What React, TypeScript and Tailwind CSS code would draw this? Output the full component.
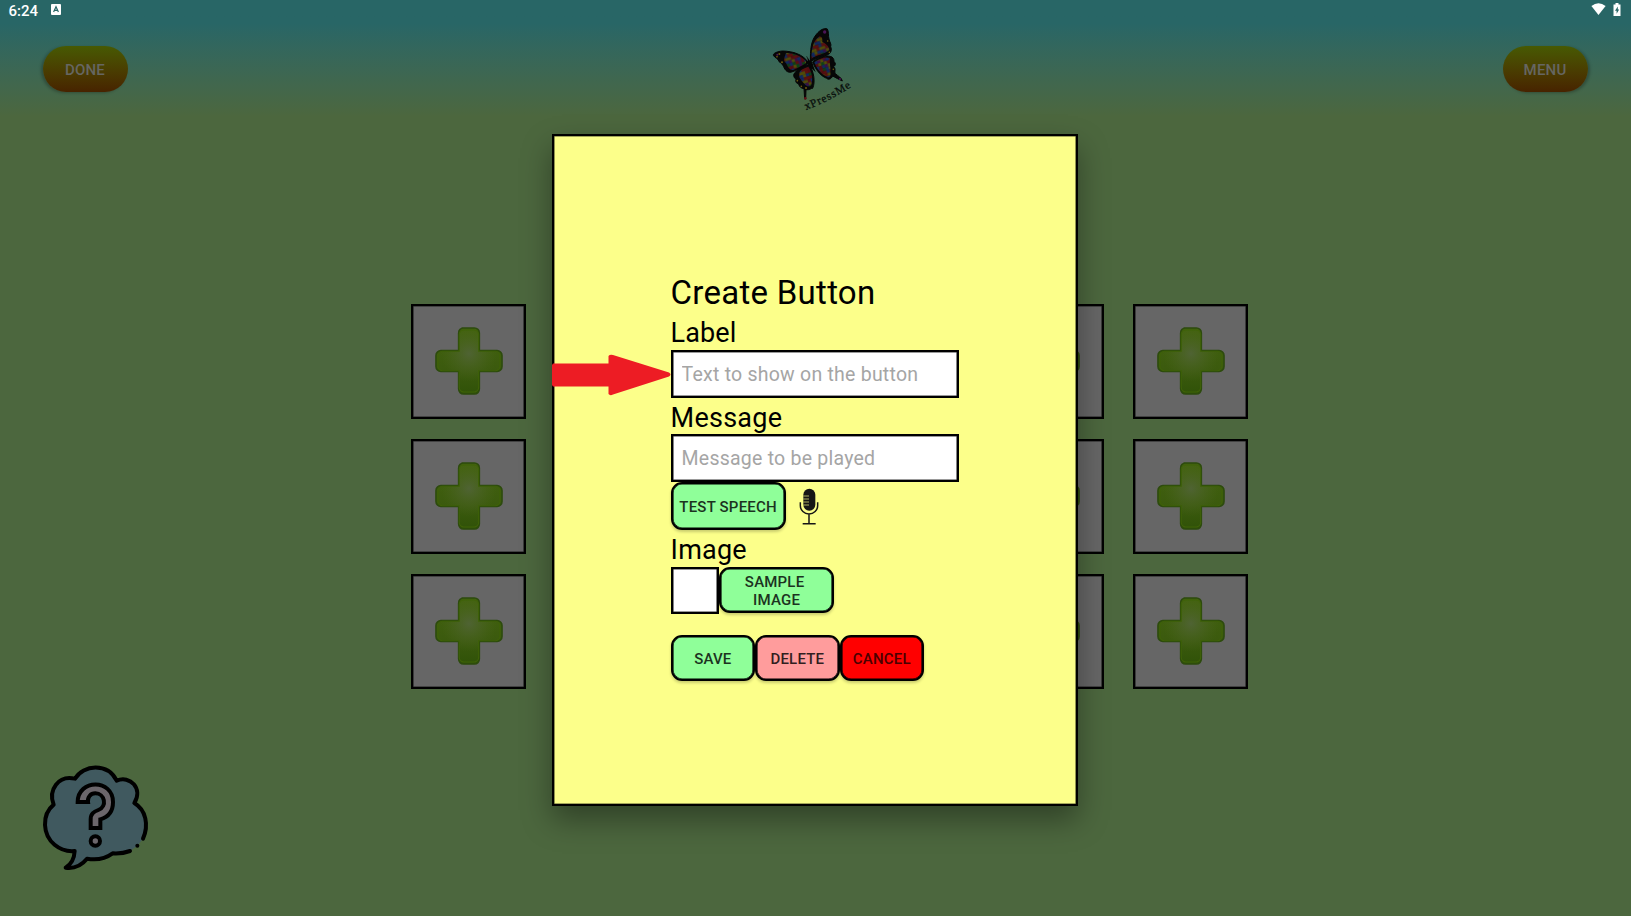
import React from "react";

const PALETTE = ["#520c12", "#10285e", "#0d4016", "#504b0a", "#3a0e46", "#5a0f0e"];

const speckles = Array.from({ length: 144 }, (_, i) => ({
  x: (i % 12) * 9,
  y: Math.floor(i / 12) * 9,
  fill: PALETTE[(i * 7 + Math.floor(i / 12) * 5 + ((i * i) % 11)) % 6],
}));

function Butterfly() {
  return (
    <svg viewBox="0 0 390 330" className="h-[110px] w-[130px]">
      <defs>
        <pattern id="puzzle" width="108" height="108" patternUnits="userSpaceOnUse" patternTransform="rotate(-18)">
          {speckles.map((s, i) => (
            <g key={i} fill={s.fill}>
              <rect x={s.x} y={s.y} width="9.5" height="9.5" />
              <circle cx={s.x + 9} cy={s.y + 4} r="2.6" />
            </g>
          ))}
        </pattern>
      </defs>
      <g stroke="#050505" strokeLinejoin="round" strokeWidth="3">
        <path fill="#070707" d="M181 156 C181 120 182 92 200 72 C210 60 222 53 232 57 C237 65 234 77 237 87 C239 97 245 102 242 110 C246 119 244 130 232 135 C213 140 196 145 181 156Z" />
        <path fill="#070707" d="M174 156 C158 133 130 124 98 123 C82 124 69 130 70 136 C74 144 86 146 87 155 C94 159 98 164 101 170 C105 181 113 188 122 187 C142 181 159 171 174 160Z" />
        <path fill="#070707" d="M188 156 C206 140 232 134 246 141 C252 146 252 151 252 155 C260 160 255 167 251 170 C259 177 252 184 256 191 C264 198 275 203 277 213 C266 209 257 202 248 198 C243 208 235 210 230 205 C211 198 195 176 188 156Z" />
        <path fill="#070707" d="M178 163 C160 168 143 176 136 187 C128 193 131 203 138 208 C135 218 141 220 146 222 C148 231 154 235 162 236 L164 267 L167 267 L168 239 C178 241 184 234 188 235 C197 215 191 184 178 163Z" />
      </g>
      <g fill="url(#puzzle)">
        <path d="M184 146 C185 115 189 92 207 80 C216 77 218 87 217 96 C226 99 239 111 238 120 C224 133 200 134 184 146Z" />
        <path d="M168 153 C151 136 128 128 108 129 C105 140 97 151 108 159 C114 171 119 181 129 180 C143 175 156 167 168 159Z" />
        <path d="M193 157 C207 145 228 138 240 145 C237 158 243 172 241 187 C244 198 238 205 231 200 C213 193 199 174 193 157Z" />
        <path d="M175 170 C159 175 147 182 148 191 C144 201 154 211 163 221 C171 231 180 231 184 225 C189 209 187 188 175 170Z" />
      </g>
      <g fill="#6b5a10">
        <circle cx="88" cy="132" r="3" />
        <circle cx="81" cy="140" r="2.5" />
        <circle cx="96" cy="157" r="3" />
        <circle cx="142" cy="212" r="2.5" />
        <circle cx="154" cy="229" r="2.5" />
        <circle cx="168" cy="234" r="3" />
        <circle cx="250" cy="178" r="2.5" />
        <circle cx="233" cy="93" r="2.5" />
        <circle cx="238" cy="127" r="2.5" />
      </g>
      <g fill="#4a1556">
        <circle cx="224" cy="66" r="5" />
        <circle cx="82" cy="134" r="3" />
        <circle cx="270" cy="207" r="3" />
      </g>
      <circle cx="166" cy="265" r="4" fill="#5f1217" />
      <path d="M173 143 L178 151 C184 153 189 160 190 168 L197 187 L184 174 L174 161Z" fill="#050505" />
      <path d="M176 151 L170 139 M181 152 L183 141" stroke="#050505" strokeWidth="2" fill="none" />
      <path id="logo-line" d="M168 300 Q242 273 320 221" fill="none" />
      <text fill="#070d0b" stroke="#070d0b" strokeWidth="0.8" fontSize="34" fontFamily="'Liberation Serif', serif">
        <textPath href="#logo-line" textLength="153">xPressMe</textPath>
      </text>
    </svg>
  );
}

const PLUS =
  "M29 2 h13 a5 5 0 0 1 5 5 v18 h18 a5 5 0 0 1 5 5 v11 a5 5 0 0 1 -5 5 h-18 v18 a5 5 0 0 1 -5 5 h-11 a5 5 0 0 1 -5 -5 v-18 h-18 a5 5 0 0 1 -5 -5 v-11 a5 5 0 0 1 5 -5 h18 v-18 a5 5 0 0 1 5 -5z";

function Tile() {
  return (
    <div className="flex h-[115px] w-[115px] items-center justify-center border-2 border-black bg-[#666666] pb-px pr-[0.5px] shadow-[inset_0_0_0_0.6px_rgba(0,0,0,0.7)]">
      <svg viewBox="0 0 72 71" className="h-[70px] w-[71px]">
        <defs>
          <linearGradient id="plus" x1="0" y1="0" x2="0" y2="1">
            <stop offset="0" stopColor="#43630f" />
            <stop offset="0.65" stopColor="#3b5a0e" />
            <stop offset="1" stopColor="#305208" />
          </linearGradient>
          <radialGradient id="shine" cx="0.5" cy="0.38" r="0.45">
            <stop offset="0" stopColor="#52643a" stopOpacity="0.85" />
            <stop offset="1" stopColor="#4d6620" stopOpacity="0" />
          </radialGradient>
        </defs>
        <path d={PLUS} fill="url(#plus)" stroke="#2d4b0d" strokeWidth="1.6" />
        <path d={PLUS} fill="url(#shine)" stroke="#3f6208" strokeWidth="1.2" transform="translate(2.2 2.2) scale(0.938)" />
      </svg>
    </div>
  );
}

function HelpBubble() {
  return (
    <svg viewBox="0 0 450 420" className="h-[140px] w-[150px]" fill="none" stroke="#000" strokeWidth="12" strokeLinecap="round" strokeLinejoin="round">
      <path
        fill="#40595f"
        stroke="none"
        d="M165 86 C190 43 263 38 290 92 C330 75 370 115 343 159 C378 180 389 225 370 265 L352 287 L330 303 Q305 312 278 310 Q245 334 201 326 Q175 358 137 353 C153 343 163 325 164 303 C120 307 77 275 75 225 C74 200 84 178 101 164 C84 120 115 74 165 86Z"
      />
      <path d="M330 303 Q305 312 278 310 Q245 334 201 326 Q175 358 137 353 C153 343 163 325 164 303 C120 307 77 275 75 225 C74 200 84 178 101 164 C84 120 115 74 165 86 C190 43 263 38 290 92 C330 75 370 115 343 159 C378 180 387 225 369 266" />
      <path d="M352 287 h0.1" />
      <path fill="#6b666b" strokeLinejoin="miter" d="M173 156 C174 86 279 86 279 156 C279 183 266 201 241 208 V234 H212 V208 C212 190 222 185 235 180 C263 169 254 130 226 130 C211 130 202 142 204 156Z" />
      <circle cx="226" cy="273" r="14" fill="#6b666b" />
    </svg>
  );
}

function Mic() {
  return (
    <svg viewBox="0 0 60 114" className="h-[38px] w-[20px]" fill="none" stroke="#161616" strokeWidth="4.5">
      <rect x="13" y="2" width="36" height="66" rx="18" fill="#161616" stroke="none" />
      <path d="M13 24 h17 M13 33 h17 M13 42 h17 M13 51 h17" stroke="#fcff8a" strokeWidth="2" />
      <path d="M4 43 v10 a26 25 0 0 0 52 0 v-10 M30 80 v27 M11 107 h39" />
    </svg>
  );
}

const actionBase =
  "flex items-center justify-center rounded-[11px] border-2 border-black pt-px text-[15px] font-medium leading-[18px] tracking-[0.2px] shadow-[inset_0_0_0_0.6px_#000,0_2px_3px_rgba(0,0,0,0.2)]";
const pill =
  "flex h-[46px] w-[85px] items-center justify-center rounded-full bg-linear-to-b from-[#465a03] to-[#472300] pt-[2px] text-[15px] font-medium tracking-[0.2px] text-[#666662]";
const field =
  "block h-[48px] w-[288px] border-2 border-black bg-white pl-[9px] text-[19.5px] tracking-[0.23px] text-black shadow-[inset_0_0_0_0.6px_rgba(0,0,0,0.8)] outline-none placeholder:text-[#a5a5a5]";

export default function App() {
  return (
    <div className="relative flex h-[916px] w-[1631px] flex-col overflow-hidden bg-[#4c673e] font-['Roboto',sans-serif]">
      <header className="flex h-[120px] flex-col bg-linear-to-b from-[#286666] from-[20%] to-[#4c673e] to-[97%]">
        <div className="flex h-5 items-center justify-between pl-[8.5px] pr-[10px] text-white">
          <div className="flex items-center gap-[13px]">
            <span className="pt-px text-[15px] font-medium leading-5">6:24</span>
            <svg viewBox="0 0 10 11" className="mb-[2px] h-[11px] w-[10px]">
              <rect width="10" height="11" rx="1" fill="#fff" />
              <path d="M2.6 8 L5 2.7 L7.4 8 M3.6 6.3 h2.8" stroke="#286666" strokeWidth="1.2" fill="none" />
            </svg>
          </div>
          <div className="flex items-center gap-[7px]">
            <svg viewBox="0 0 15 12" className="mb-[2px] h-3 w-[15px]">
              <path d="M0.4 3 Q7.5 -2.5 14.6 3 L7.5 12Z" fill="#fff" />
            </svg>
            <svg viewBox="0 0 8 13" className="mb-[2px] h-[13px] w-2">
              <path d="M0.5 1.5 h2 V0 h3 v1.5 h2 V13 h-7z" fill="#fff" />
              <path d="M4.8 3.5 L2 7.7 h1.6 v3 L6.2 6.6 H4.8z" fill="#286666" />
            </svg>
          </div>
        </div>
        <div className="flex items-start justify-between pl-[42.5px] pr-[43.5px] pt-[26px]">
          <button className={`${pill} shadow-[-2px_1px_3px_rgba(0,0,0,0.25)]`}>DONE</button>
          <div className="-mt-9 mr-px">
            <Butterfly />
          </div>
          <button className={`${pill} shadow-[2px_1px_3px_rgba(0,0,0,0.25)]`}>MENU</button>
        </div>
      </header>

      <main className="grid grid-cols-[repeat(6,115px)] gap-x-[29.4px] gap-y-[20px] pl-[411px] pt-[184px]">
        {Array.from({ length: 18 }, (_, i) => (
          <Tile key={i} />
        ))}
      </main>

      <footer className="mt-auto pb-[26px] pl-[19.5px]">
        <HelpBubble />
      </footer>

      <div
        role="dialog"
        className="absolute left-[552px] top-[134px] flex h-[672px] w-[526px] flex-col border-2 border-black bg-[#fcff8a] pl-[116.6px] pt-[136px] text-black shadow-[inset_0_0_0_0.6px_rgba(0,0,0,0.7),0_14px_28px_rgba(0,0,0,0.36)]"
      >
        <h1 className="h-[41px] text-[33px] font-normal leading-[41px] tracking-[0.27px]">Create Button</h1>
        <label className="h-[37px] text-[27px] leading-[40px] tracking-[0.1px]">Label</label>
        <input className={field} placeholder="Text to show on the button" />
        <label className="h-[36px] text-[27px] leading-[40px] tracking-[0.25px]">Message</label>
        <input className={field} placeholder="Message to be played" />
        <div className="flex items-start">
          <button className={`${actionBase} h-[48px] w-[115px] bg-[#8fff99] text-[#1c331f]`}>TEST SPEECH</button>
          <div className="ml-[13.5px] mt-[5.5px]">
            <Mic />
          </div>
        </div>
        <div className="h-[37px] text-[27px] leading-[41px] tracking-[0.2px]">Image</div>
        <div className="flex items-start">
          <div className="h-[47px] w-[48px] border-2 border-black bg-white shadow-[inset_0_0_0_0.6px_rgba(0,0,0,0.8)]" />
          <button className={`${actionBase} h-[46px] w-[115px] bg-[#8fff99] pr-[3px] text-[#1c331f]`}>
            <span>
              SAMPLE
              <br />
              &nbsp;IMAGE
            </span>
          </button>
        </div>
        <div className="mt-[21px] flex">
          <button className={`${actionBase} h-[46px] w-[84.5px] bg-[#8fff99] text-[#1c331f]`}>SAVE</button>
          <button className={`${actionBase} h-[46px] w-[84.5px] bg-[#ff9c9c] text-[#331f1f]`}>DELETE</button>
          <button className={`${actionBase} h-[46px] w-[84.5px] bg-[#ff0000] text-[#4a0000]`}>CANCEL</button>
        </div>
        <svg viewBox="0 0 119 42" className="absolute left-[-2px] top-[218px] h-[42px] w-[119px]">
          <path d="M1 9.5 H56.5 V2 Q58 0 61 1 L117 18.5 Q120 20.5 117 22.5 L61 40.5 Q58 42 56.5 40 V32.5 H1 L0 31 V11Z" fill="#ed1c24" />
        </svg>
      </div>
    </div>
  );
}
